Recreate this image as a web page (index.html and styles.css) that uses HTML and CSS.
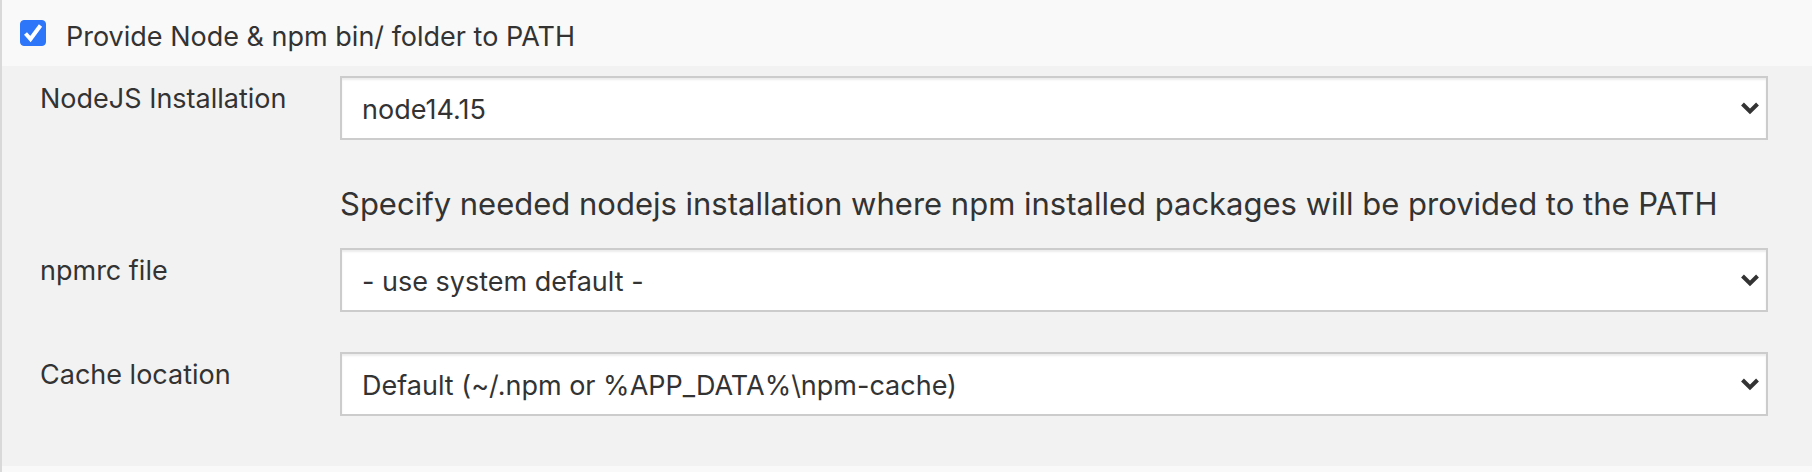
FILE: index.html
```html
<!DOCTYPE html>
<html lang="en">
<head>
<meta charset="utf-8">
<title>Build Environment</title>
<link rel="stylesheet" href="styles.css">
</head>
<body>
<form class="section">
  <div class="option">
    <span class="check">
      <input class="check-input" type="checkbox" id="provide" checked>
      <svg class="check-mark" viewBox="0 0 26 26" aria-hidden="true"><path d="M5.5 13.5 L10.5 19 L20.5 5.5"/></svg>
    </span>
    <label class="option-label" for="provide">Provide Node &amp; npm bin/ folder to PATH</label>
  </div>
  <div class="panel">
    <div class="row">
      <label class="row-label" for="node">NodeJS Installation</label>
      <div class="setting">
        <div class="select">
          <select class="select-input" id="node" aria-describedby="node-help"><option>node14.15</option></select>
          <svg class="chevron" viewBox="0 0 18 13" aria-hidden="true"><path d="M1.5 2 L9 9.5 L16.5 2"/></svg>
        </div>
        <p class="help" id="node-help">Specify needed nodejs installation where npm installed packages will be provided to the PATH</p>
      </div>
    </div>
    <div class="row">
      <label class="row-label" for="npmrc">npmrc file</label>
      <div class="setting">
        <div class="select">
          <select class="select-input" id="npmrc"><option>- use system default -</option></select>
          <svg class="chevron" viewBox="0 0 18 13" aria-hidden="true"><path d="M1.5 2 L9 9.5 L16.5 2"/></svg>
        </div>
      </div>
    </div>
    <div class="row">
      <label class="row-label" for="cache">Cache location</label>
      <div class="setting">
        <div class="select">
          <select class="select-input" id="cache"><option>Default (~/.npm or %APP_DATA%\npm-cache)</option></select>
          <svg class="chevron" viewBox="0 0 18 13" aria-hidden="true"><path d="M1.5 2 L9 9.5 L16.5 2"/></svg>
        </div>
      </div>
    </div>
  </div>
</form>
</body>
</html>
```
FILE: styles.css
```css
* { box-sizing: border-box; }
body {
  margin: 0;
  background: #f9f9f9;
  color: #333;
  font: 27px/34px Inter, "Liberation Sans", sans-serif;
}
.section {
  min-height: 100vh;
  border-left: 2px solid #d9d9d9;
}
.option {
  display: flex;
  align-items: flex-start;
  gap: 20px;
  padding: 20px 18px 12px;
}
.check { display: grid; }
.check-input, .check-mark {
  grid-area: 1 / 1;
  width: 26px;
  height: 26px;
  margin: 0;
}
.check-input {
  appearance: none;
  border: 1px solid #767676;
  border-radius: 4px;
  background: #fff;
}
.check-input:checked {
  border-color: #2d76f9;
  background: #2d76f9;
}
.check-mark {
  fill: none;
  stroke: #fff;
  stroke-width: 4;
  pointer-events: none;
}
.check-input:not(:checked) + .check-mark { display: none; }
.panel {
  display: grid;
  gap: 40px;
  padding: 10px 44px 50px 38px;
  background: #f2f2f2;
}
.row {
  display: grid;
  grid-template-columns: 300px 1fr;
}
.row:first-child { margin-bottom: -14px; }
.row-label { padding-top: 6px; }
.select { display: grid; }
.select-input {
  grid-area: 1 / 1;
  appearance: none;
  width: 100%;
  height: 64px;
  padding: 4px 40px 0 20px;
  border: 2px solid #ccc;
  border-radius: 0;
  background: #fff;
  box-shadow: inset 0 2px 2px rgba(0, 0, 0, 0.075);
  color: inherit;
  font: inherit;
}
.chevron {
  grid-area: 1 / 1;
  place-self: center end;
  width: 18px;
  height: 13px;
  margin-right: 9px;
  fill: none;
  stroke: #333;
  stroke-width: 4;
  pointer-events: none;
}
.help {
  margin: 46px 0 0;
  font-size: 31px;
  line-height: 36px;
}
```
